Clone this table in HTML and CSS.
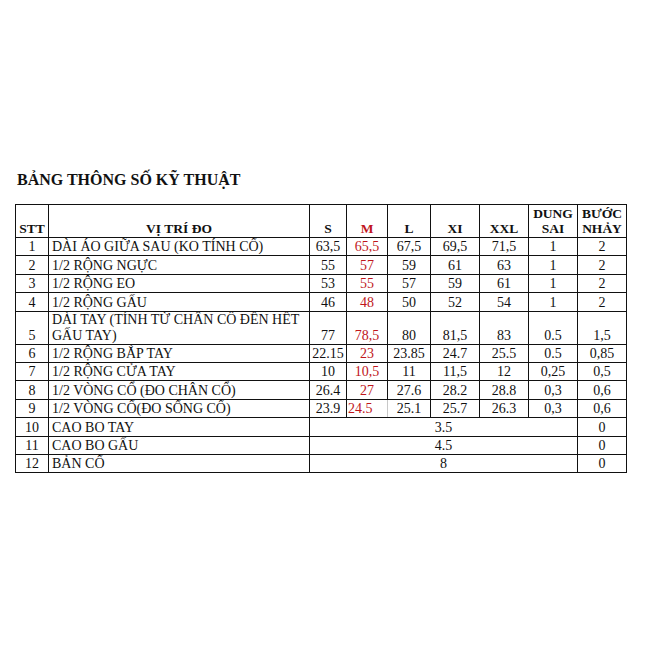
FILE: index.html
```html
<!DOCTYPE html>
<html lang="vi">
<head>
<meta charset="utf-8">
<title>Bảng thông số kỹ thuật</title>
<link rel="stylesheet" href="styles.css">
</head>
<body>
<div class="page">
  <h1 class="title">BẢNG THÔNG SỐ KỸ THUẬT</h1>
  <table class="spec">
    <colgroup>
      <col class="c-stt"><col class="c-pos"><col class="c-s"><col class="c-m"><col class="c-l"><col class="c-xl"><col class="c-xxl"><col class="c-ds"><col class="c-bn">
    </colgroup>
    <thead>
      <tr class="head">
        <th>STT</th><th>VỊ TRÍ ĐO</th><th>S</th><th class="red">M</th><th>L</th><th>XI</th><th>XXL</th><th>DUNG<br>SAI</th><th>BƯỚC<br>NHẢY</th>
      </tr>
    </thead>
    <tbody>
      <tr><td>1</td><td class="pos">DÀI ÁO GIỮA SAU (KO TÍNH CỔ)</td><td>63,5</td><td class="red">65,5</td><td>67,5</td><td>69,5</td><td>71,5</td><td>1</td><td>2</td></tr>
      <tr><td>2</td><td class="pos">1/2 RỘNG NGỰC</td><td>55</td><td class="red">57</td><td>59</td><td>61</td><td>63</td><td>1</td><td>2</td></tr>
      <tr><td>3</td><td class="pos">1/2 RỘNG EO</td><td>53</td><td class="red">55</td><td>57</td><td>59</td><td>61</td><td>1</td><td>2</td></tr>
      <tr><td>4</td><td class="pos">1/2 RỘNG GẤU</td><td>46</td><td class="red">48</td><td>50</td><td>52</td><td>54</td><td>1</td><td>2</td></tr>
      <tr class="tall"><td>5</td><td class="pos">DÀI TAY (TÍNH TỪ CHÂN CỔ ĐẾN HẾT GẤU TAY)</td><td>77</td><td class="red">78,5</td><td>80</td><td>81,5</td><td>83</td><td>0.5</td><td>1,5</td></tr>
      <tr><td>6</td><td class="pos">1/2 RỘNG BẮP TAY</td><td>22.15</td><td class="red">23</td><td>23.85</td><td>24.7</td><td>25.5</td><td>0.5</td><td>0,85</td></tr>
      <tr><td>7</td><td class="pos">1/2 RỘNG CỬA TAY</td><td>10</td><td class="red">10,5</td><td>11</td><td>11,5</td><td>12</td><td>0,25</td><td>0,5</td></tr>
      <tr><td>8</td><td class="pos">1/2 VÒNG CỔ (ĐO CHÂN CỔ)</td><td>26.4</td><td class="red">27</td><td>27.6</td><td>28.2</td><td>28.8</td><td>0,3</td><td>0,6</td></tr>
      <tr><td>9</td><td class="pos">1/2 VÒNG CỔ(ĐO SỐNG CỔ)</td><td>23.9</td><td class="red left soft">24.5</td><td>25.1</td><td>25.7</td><td>26.3</td><td>0,3</td><td>0,6</td></tr>
      <tr><td>10</td><td class="pos">CAO BO TAY</td><td colspan="6">3.5</td><td>0</td></tr>
      <tr><td>11</td><td class="pos">CAO BO GẤU</td><td colspan="6">4.5</td><td>0</td></tr>
      <tr><td>12</td><td class="pos">BẢN CỔ</td><td colspan="6">8</td><td>0</td></tr>
    </tbody>
  </table>
</div>
</body>
</html>
```
FILE: styles.css
```css
html, body {
  margin: 0;
  padding: 0;
  background: #ffffff;
}

.page {
  padding: 169px 0 0 15px;
  font-family: "Liberation Serif", "Times New Roman", serif;
  color: #111111;
}

.title {
  margin: 0 0 13px 2px;
  font-size: 16px;
  font-weight: bold;
  line-height: 22px;
  color: #111111;
}

.spec {
  border-collapse: collapse;
  table-layout: fixed;
  width: 612px;
  font-family: "Liberation Serif", "Times New Roman", serif;
  font-size: 14px;
}

.c-stt { width: 33px; }
.c-pos { width: 261px; }
.c-s { width: 37px; }
.c-m { width: 41px; }
.c-l { width: 43px; }
.c-xl { width: 49px; }
.c-xxl { width: 49px; }
.c-ds { width: 49px; }
.c-bn { width: 49px; }

.spec th,
.spec td {
  border: 1px solid #111111;
  padding: 0 1px;
  text-align: center;
  vertical-align: bottom;
  line-height: 16px;
  overflow: hidden;
  white-space: nowrap;
}

.spec th {
  font-size: 13.5px;
  font-weight: bold;
  line-height: 15px;
  padding-bottom: 1px;
}

.head {
  height: 33px;
}

.spec tbody tr {
  height: 18.4px;
}

.spec tbody tr.tall {
  height: 33px;
}

.spec td.pos {
  text-align: left;
  padding-left: 3px;
  white-space: normal;
}

.red {
  color: #c0161b;
}

.left {
  text-align: left !important;
}

.soft {
  border-right-color: #c8c8c8 !important;
}
```
